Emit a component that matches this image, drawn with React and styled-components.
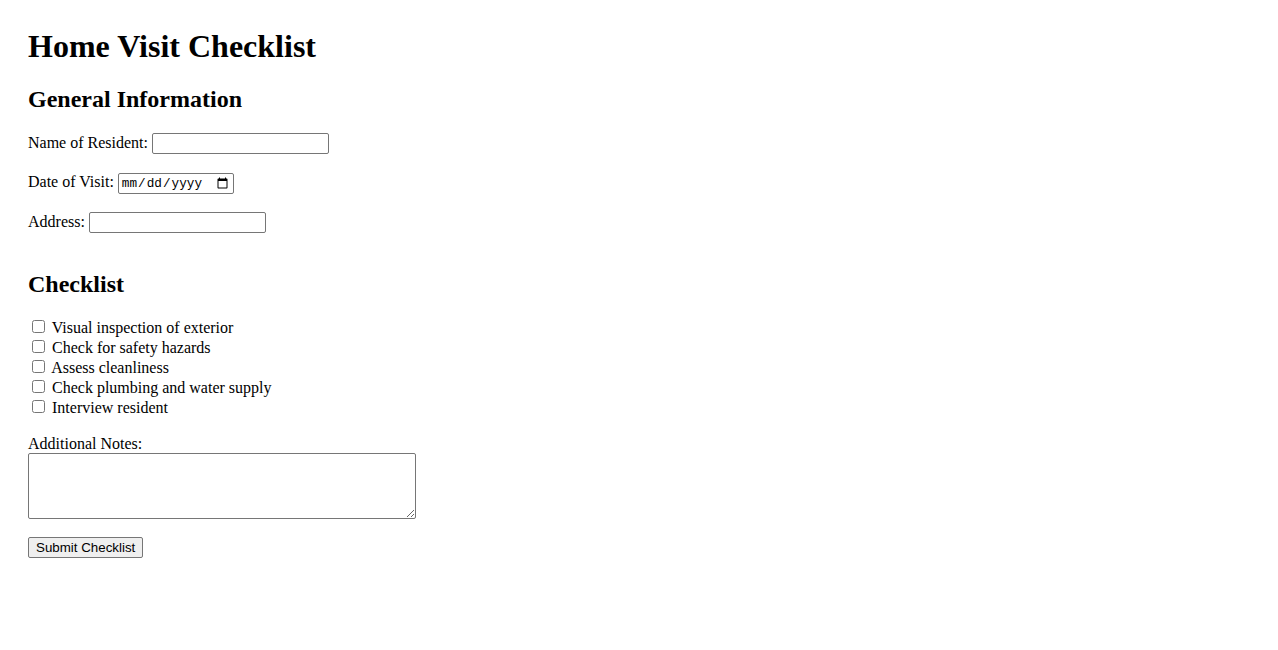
import React from "react";
import styled, { createGlobalStyle } from "styled-components";

const Global = createGlobalStyle`
  html, body { background: #fff; }
  body {
    margin: 8px;
    font-family: "Liberation Serif", "Times New Roman", serif;
    font-size: 16px;
    color: #000;
  }
`;

const Page = styled.div`
  padding: 20px;
`;

const Title = styled.h1`
  font-size: 32px;
  font-weight: bold;
  margin: 0 0 21.44px;
`;

const SectionTitle = styled.h2`
  font-size: 24px;
  font-weight: bold;
  margin: ${(p) => p.$top || "19.92px"} 0 ${(p) => p.$bottom || "19.92px"};
`;

const Field = styled.p`
  margin: 16px 0 18.5px;
`;

const TextInput = styled.input`
  font-family: "Liberation Sans", Arial, sans-serif;
  font-size: 13.33px;
  padding: 1px 2px;
  border: 1px solid #767676;
  border-radius: 2px;
  width: 177px;
  height: 21px;
  box-sizing: border-box;
  margin: 0;
  vertical-align: baseline;
`;

const DateInput = styled.input`
  font-family: "Liberation Mono", "DejaVu Sans Mono", monospace;
  font-size: 12.7px;
  padding: 1px 2px;
  border: 1px solid #767676;
  border-radius: 2px;
  width: 116px;
  height: 21px;
  box-sizing: border-box;
  margin: 0;
`;

const List = styled.div`
  margin: 0;
`;

const Item = styled.div`
  line-height: 20px;
  height: 20px;
`;

const Check = styled.input`
  width: 13px;
  height: 13px;
  margin: 3px 3px 3px 4px;
  vertical-align: baseline;
`;

const NotesBlock = styled.div`
  margin-top: 18px;
`;

const NotesLabel = styled.label`
  display: block;
  line-height: 18px;
`;

const Notes = styled.textarea`
  display: block;
  width: 388px;
  height: 66px;
  box-sizing: border-box;
  border: 1px solid #767676;
  border-radius: 2px;
  padding: 2px;
  margin: 0;
  font-family: "Liberation Mono", monospace;
  font-size: 13.33px;
`;

const ButtonRow = styled.div`
  margin-top: 18px;
`;

const Submit = styled.button`
  font-family: "Liberation Sans", Arial, sans-serif;
  font-size: 13.33px;
  color: #000;
  background: #efefef;
  border: 1px solid #767676;
  border-radius: 2px;
  padding: 1px 7px;
  height: 21px;
  box-sizing: border-box;
  margin: 0;
`;

const items = [
  "Visual inspection of exterior",
  "Check for safety hazards",
  "Assess cleanliness",
  "Check plumbing and water supply",
  "Interview resident",
];

export default function App() {
  return (
    <>
      <Global />
      <Page>
        <Title>Home Visit Checklist</Title>
        <SectionTitle $top="0">General Information</SectionTitle>
        <Field>
          Name of Resident: <TextInput type="text" />
        </Field>
        <Field>
          Date of Visit: <DateInput type="date" />
        </Field>
        <Field>
          Address: <TextInput type="text" />
        </Field>
        <SectionTitle $top="38px" $bottom="18.92px">Checklist</SectionTitle>
        <List>
          {items.map((t) => (
            <Item key={t}>
              <Check type="checkbox" /> {t}
            </Item>
          ))}
        </List>
        <NotesBlock>
          <NotesLabel>Additional Notes:</NotesLabel>
          <Notes />
        </NotesBlock>
        <ButtonRow>
          <Submit type="button">Submit Checklist</Submit>
        </ButtonRow>
      </Page>
    </>
  );
}
